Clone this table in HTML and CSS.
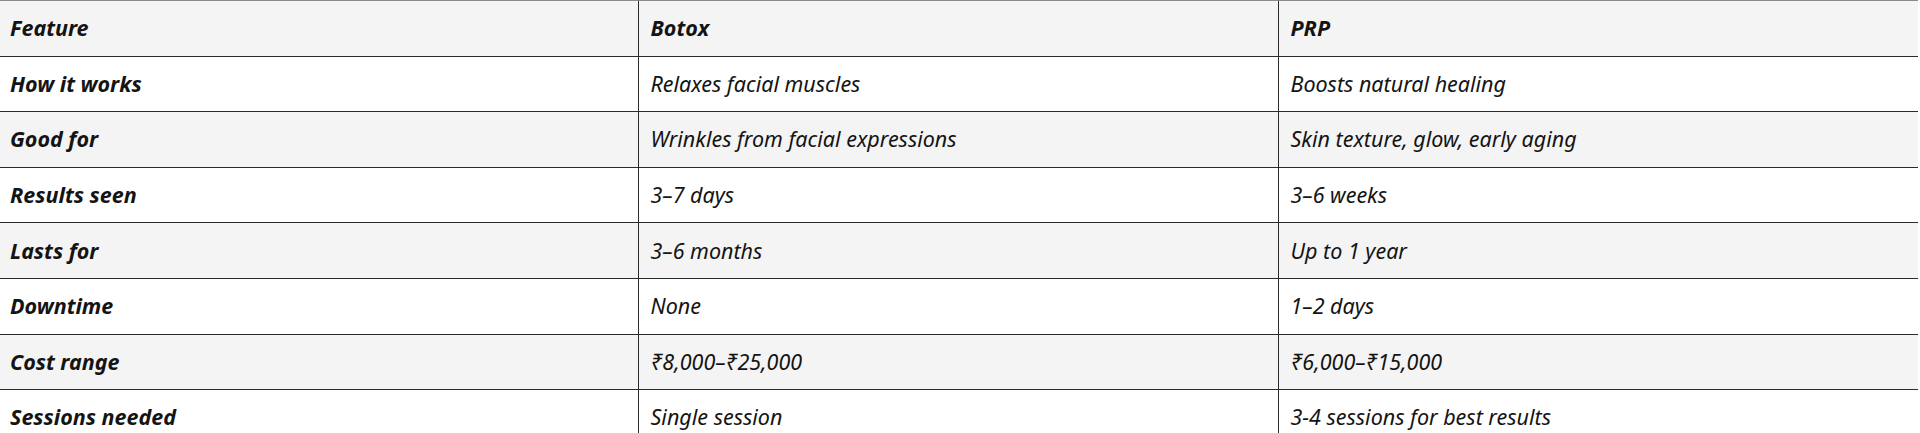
FILE: index.html
```html
<!DOCTYPE html>
<html lang="en">
<head>
<meta charset="utf-8">
<title>Botox vs PRP</title>
<link rel="stylesheet" href="styles.css">
</head>
<body>
<table class="compare">
  <thead>
    <tr><th>Feature</th><th>Botox</th><th>PRP</th></tr>
  </thead>
  <tbody>
    <tr><th>How it works</th><td>Relaxes facial muscles</td><td>Boosts natural healing</td></tr>
    <tr><th>Good for</th><td>Wrinkles from facial expressions</td><td>Skin texture, glow, early aging</td></tr>
    <tr><th>Results seen</th><td>3–7 days</td><td>3–6 weeks</td></tr>
    <tr><th>Lasts for</th><td>3–6 months</td><td>Up to 1 year</td></tr>
    <tr><th>Downtime</th><td>None</td><td>1–2 days</td></tr>
    <tr><th>Cost range</th><td>₹8,000–₹25,000</td><td>₹6,000–₹15,000</td></tr>
    <tr><th>Sessions needed</th><td>Single session</td><td>3-4 sessions for best results</td></tr>
  </tbody>
</table>
</body>
</html>
```

FILE: styles.css
```css
html, body {
  margin: 0;
  padding: 0;
  background: #ffffff;
}

body {
  font-family: "Noto Sans", "Open Sans", sans-serif;
  color: #141414;
  overflow: hidden;
}

.compare {
  border-collapse: collapse;
  table-layout: fixed;
  width: 1920px;
  margin-left: -2px;
  font-style: italic;
  font-size: 21.5px;
}

.compare th,
.compare td {
  width: 640px;
  height: 55.6px;
  box-sizing: border-box;
  padding: 0 12px;
  text-align: left;
  vertical-align: middle;
  line-height: 1.4;
  border-top: 1px solid #2a2a2a;
  border-bottom: 1px solid #2a2a2a;
  border-left: 1px solid #2a2a2a;
}

.compare th:first-child {
  border-left: none;
}

.compare th {
  font-weight: 700;
}

.compare td {
  font-weight: 400;
}

.compare thead tr th {
  border-top-color: #8a8a8a;
}

.compare thead tr {
  background: #f4f4f4;
}

.compare tbody tr:nth-child(odd) {
  background: #ffffff;
}

.compare tbody tr:nth-child(even) {
  background: #f4f4f4;
}
```
